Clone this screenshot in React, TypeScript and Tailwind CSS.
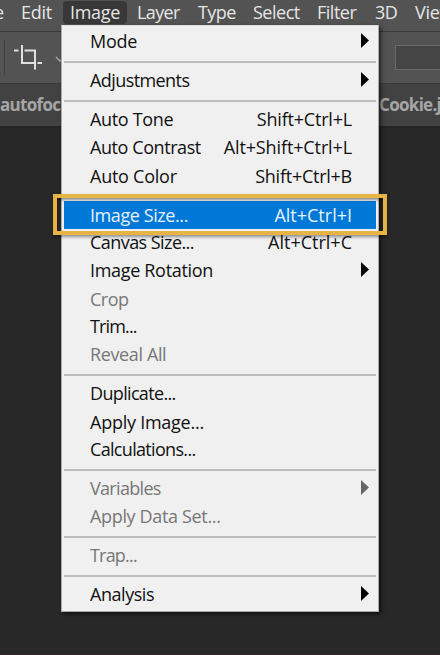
import React from "react";

type Entry = {
  label: string;
  tracking: string;
  shortcut?: string;
  keyTracking?: string;
  arrow?: boolean;
  disabled?: boolean;
  active?: boolean;
  height?: string;
  shift?: string;
};

const groups: { gap: string; items: Entry[] }[] = [
  { gap: "", items: [{ label: "Mode", tracking: "tracking-[-0.3px]", arrow: true }] },
  { gap: "h-[11px]", items: [{ label: "Adjustments", tracking: "tracking-[-0.58px]", arrow: true }] },
  {
    gap: "h-[11px]",
    items: [
      { label: "Auto Tone", tracking: "tracking-[-0.33px]", shortcut: "Shift+Ctrl+L", keyTracking: "tracking-[-0.2px]" },
      { label: "Auto Contrast", tracking: "tracking-[-0.42px]", shortcut: "Alt+Shift+Ctrl+L", keyTracking: "tracking-[-0.12px]" },
      { label: "Auto Color", tracking: "tracking-[-0.25px]", shortcut: "Shift+Ctrl+B", keyTracking: "tracking-[-0.25px]", height: "h-[29px]" },
    ],
  },
  {
    gap: "h-[10px]",
    items: [
      { label: "Image Size...", tracking: "tracking-[-0.42px]", shortcut: "Alt+Ctrl+I", keyTracking: "tracking-[0px]", active: true, shift: "pb-0" },
      { label: "Canvas Size...", tracking: "tracking-[-0.56px]", shortcut: "Alt+Ctrl+C", keyTracking: "tracking-[0px]" },
      { label: "Image Rotation", tracking: "tracking-[-0.32px]", arrow: true },
      { label: "Crop", tracking: "tracking-[-0.5px]", disabled: true, shift: "pb-0" },
      { label: "Trim...", tracking: "tracking-[-0.85px]" },
      { label: "Reveal All", tracking: "tracking-[-0.38px]", disabled: true },
    ],
  },
  {
    gap: "h-[11px]",
    items: [
      { label: "Duplicate...", tracking: "tracking-[-0.66px]" },
      { label: "Apply Image...", tracking: "tracking-[-0.25px]", shift: "pb-0" },
      { label: "Calculations...", tracking: "tracking-[-0.68px]" },
    ],
  },
  {
    gap: "h-[11px]",
    items: [
      { label: "Variables", tracking: "tracking-[-0.68px]", disabled: true, arrow: true },
      { label: "Apply Data Set...", tracking: "tracking-[-0.34px]", disabled: true },
    ],
  },
  { gap: "h-[11px]", items: [{ label: "Trap...", tracking: "tracking-[-0.8px]", disabled: true }] },
  { gap: "h-[11px]", items: [{ label: "Analysis", tracking: "tracking-[-0.45px]", arrow: true }] },
];

function Row({ item }: { item: Entry }) {
  const tone = item.active ? "bg-[#0078d7] text-[#e6f3ff]" : item.disabled ? "text-[#777]" : "text-[#111]";
  const shift = item.shift ?? "pb-[2px]";
  return (
    <div className={`flex shrink-0 items-center pl-[26px] ${item.height ?? "h-7"} ${tone}`}>
      <span className={`${item.tracking} ${shift}`}>{item.label}</span>
      {item.shortcut && <span className={`ml-auto mr-6 ${item.keyTracking} ${shift}`}>{item.shortcut}</span>}
      {item.arrow && (
        <svg className={`mb-1 ml-auto mr-[7px] ${item.disabled ? "fill-[#666]" : "fill-black"}`} width="8" height="15" viewBox="0 0 8 15">
          <path d="M0 0 8 7.5 0 15Z" />
        </svg>
      )}
    </div>
  );
}

export default function App() {
  return (
    <div className="relative h-[655px] w-[440px] overflow-hidden bg-[#282828] font-['Open_Sans','Noto_Sans',sans-serif] text-[18px] leading-[28px] whitespace-nowrap">
      <header className="flex h-[31px] items-start bg-[#535353] text-[#e6e6e6]">
        <span className="-ml-[6px] -mt-[2px] w-[27px] shrink-0">e</span>
        <span className="-mt-[2px] w-[42px] shrink-0 tracking-[-0.3px]">Edit</span>
        <span className="mt-px h-[23px] w-16 shrink-0 rounded bg-[#383838] pl-[7px] leading-[22px] tracking-[-0.3px]">Image</span>
        <span className="-mt-[2px] ml-[10px] w-[61px] shrink-0 tracking-[-0.6px]">Layer</span>
        <span className="-mt-[2px] w-[55px] shrink-0 tracking-[-0.6px]">Type</span>
        <span className="-mt-[2px] w-[64px] shrink-0 tracking-[-0.5px]">Select</span>
        <span className="-mt-[2px] w-[58px] shrink-0 tracking-[-0.5px]">Filter</span>
        <span className="-mt-[2px] w-[40px] shrink-0 tracking-[-0.5px]">3D</span>
        <span className="-mt-[2px] shrink-0 tracking-[-0.3px]">View</span>
      </header>
      <div className="flex h-[52px] items-center border-t border-[#3b3b3b] bg-[#535353]">
        <i className="ml-1 h-[35px] w-px bg-[#414141]" />
        <svg className="ml-[9px]" width="28" height="26" viewBox="0 0 28 26" fill="none" stroke="#e0e0e0" strokeWidth="2">
          <path d="M0 5.5H4.5M8 0V18H21.5M10.5 5.5H21V24.5M23.5 18H28" />
        </svg>
        <svg className="ml-[13px] mt-[3px]" width="10" height="6" viewBox="0 0 10 6" fill="none" stroke="#aaa" strokeWidth="1.4"><path d="m1 1 4 4 4-4" /></svg>
        <div className="ml-auto h-[25px] w-[45px] border border-r-0 border-[#6b6b6b] bg-[#454545]" />
      </div>
      <div className="flex h-[45px] items-center border-b-2 border-t border-b-[#252525] border-t-[#3a3a3a] bg-[#424242] text-[17px] font-bold text-[#a6a6a6]">
        <span className="tracking-[-0.7px]">autofocus</span>
        <span className="ml-auto w-[61px] tracking-[-0.7px]">Cookie.jpg</span>
      </div>

      <nav className="absolute left-[61px] top-[25px] flex h-[587px] w-[318px] flex-col border border-[#aaa] border-t-[#ddd] bg-[#f0f0f0] px-[2px] pt-[2px] shadow-[2px_2px_4px_#0009]">
        {groups.map((g, n) => (
          <React.Fragment key={n}>
            {g.gap && <div className={`flex shrink-0 items-center ${g.gap}`}><i className="h-[2px] w-full bg-[#bdbdbd]" /></div>}
            {g.items.map((item) => <Row key={item.label} item={item} />)}
          </React.Fragment>
        ))}
      </nav>
      <div className="absolute left-[53px] top-[194px] h-[41px] w-[334px] border-4 border-[#e5b444] shadow-[0_2px_3px_#0006,inset_0_2px_3px_#0006]" />
      <div className="absolute inset-x-0 bottom-0 h-px bg-[#30282a]" />
    </div>
  );
}
